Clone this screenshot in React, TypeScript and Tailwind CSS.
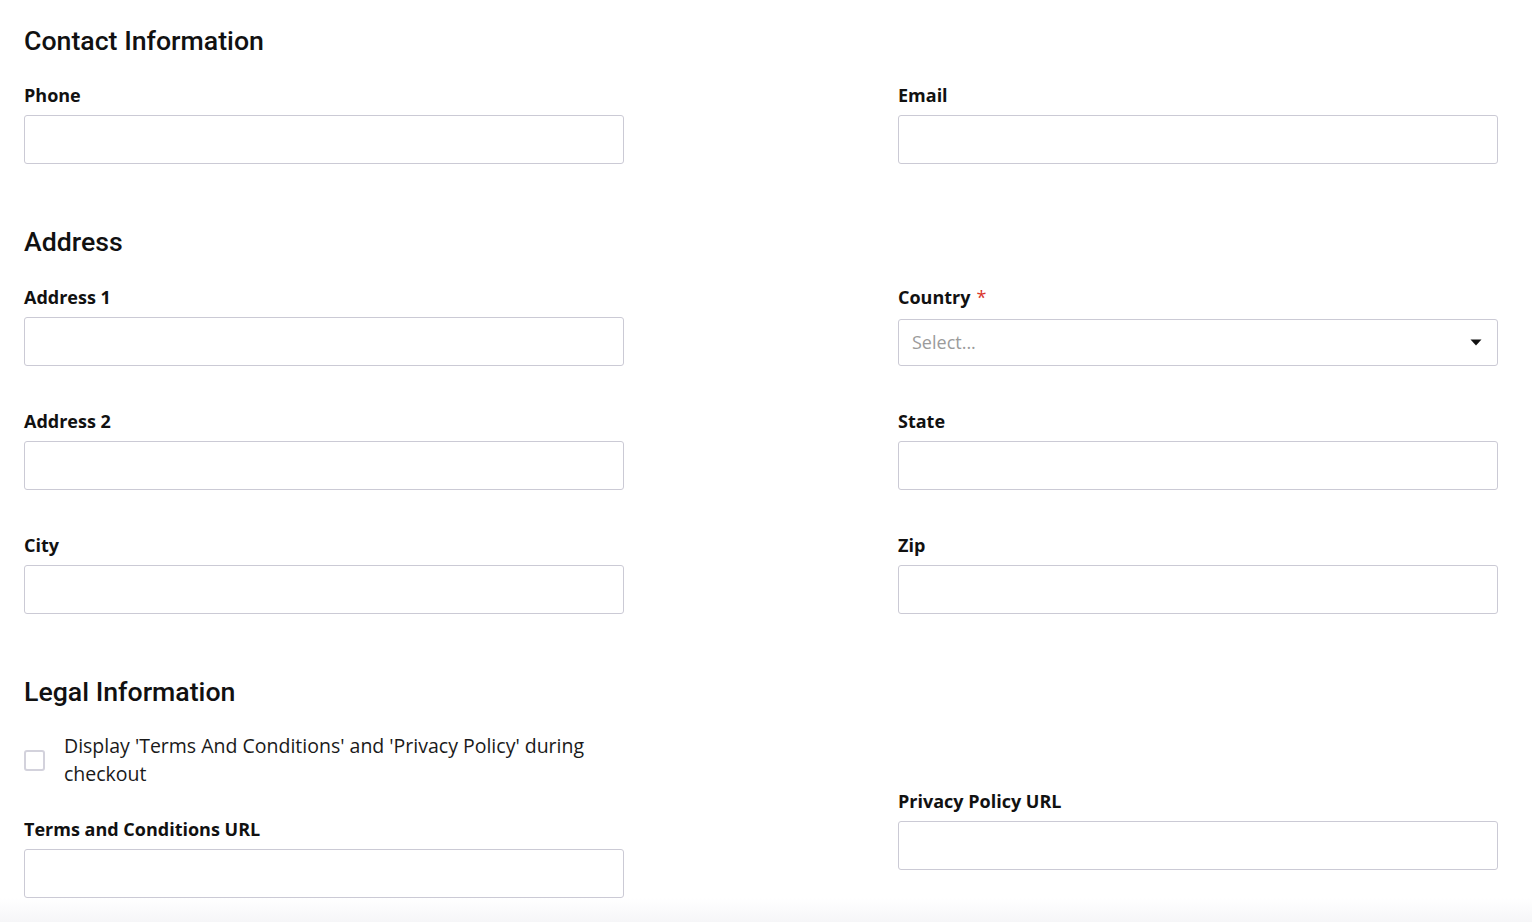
import React from "react";

const inputCls =
  "block w-full h-[49px] rounded-[3px] border border-[#cbcad5] bg-white px-3 text-[18px] outline-none";

function Field({ label, required }: { label: string; required?: boolean }) {
  return (
    <div>
      <label className="block text-[18px] leading-[24px] font-bold text-[#111]">
        {label}
        {required && <span className="ml-[6px] text-[#d9342b]">*</span>}
      </label>
      <input type="text" className={`${inputCls} mt-2`} />
    </div>
  );
}

function SelectField() {
  return (
    <div>
      <label className="block text-[18px] leading-[24px] font-bold text-[#111]">
        Country
        <span className="ml-[6px] font-normal text-[#d9342b]">*</span>
      </label>
      <div className="mt-[10px] flex h-[47px] items-center justify-between rounded-[3px] border border-[#cbcad5] bg-white pl-[13px] pr-[15px]">
        <span className="text-[18px] text-[#9b9b9b]">Select...</span>
        <svg width="12" height="7" viewBox="0 0 12 7">
          <path d="M0.5 0.5 L11.5 0.5 L6 6.5 Z" fill="#111" />
        </svg>
      </div>
    </div>
  );
}

function Heading({ children }: { children: React.ReactNode }) {
  return (
    <h2 className="font-['Roboto',sans-serif] text-[26.7px] leading-[32px] font-medium text-[#111]">
      {children}
    </h2>
  );
}

export default function App() {
  return (
    <div className="min-h-[922px] bg-white font-['Open_Sans','Noto_Sans',sans-serif] text-[#111]">
      <div className="pl-6 pr-[34px] pt-[25px]">
        <section>
          <Heading>Contact Information</Heading>
          <div className="mt-[26px] grid grid-cols-[600px_600px] justify-between">
            <Field label="Phone" />
            <Field label="Email" />
          </div>
        </section>

        <section className="mt-[62px]">
          <Heading>Address</Heading>
          <div className="mt-[27px] grid grid-cols-[600px_600px] justify-between gap-y-[43px]">
            <Field label="Address 1" />
            <SelectField />
            <Field label="Address 2" />
            <Field label="State" />
            <Field label="City" />
            <Field label="Zip" />
          </div>
        </section>

        <section className="mt-[62px]">
          <Heading>Legal Information</Heading>
          <div className="mt-[24px] grid grid-cols-[600px_600px] justify-between">
            <div>
              <div className="flex items-center">
                <span className="h-[21px] w-[21px] shrink-0 rounded-[3px] border-2 border-[#d3d2dc] bg-white" />
                <p className="ml-[19px] w-[545px] text-[19.5px] leading-[28px] text-[#1a1a1a]">
                  Display 'Terms And Conditions' and 'Privacy Policy' during checkout
                </p>
              </div>
              <div className="mt-[29px]">
                <Field label="Terms and Conditions URL" />
              </div>
            </div>
            <div className="flex flex-col justify-end pb-[28px]">
              <Field label="Privacy Policy URL" />
            </div>
          </div>
        </section>
      </div>
      <div className="h-[24px] bg-gradient-to-b from-white to-[#f6f6f8]" />
    </div>
  );
}
